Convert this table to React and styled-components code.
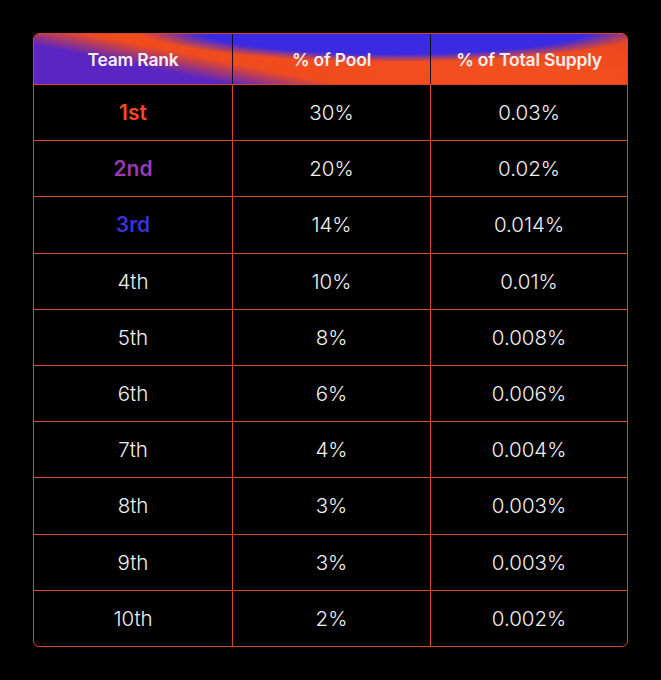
import React from 'react'
import styled, { createGlobalStyle } from 'styled-components'

const Global = createGlobalStyle`
  html, body {
    margin: 0;
    background: #000;
  }
  body {
    font-family: Inter, "Noto Sans", sans-serif;
    color: #f2f2f2;
  }
`

const Page = styled.div`
  width: 661px;
  height: 680px;
  padding: 33px 33px 0 33px;
  box-sizing: border-box;
  background: #000;
`

const Table = styled.div`
  width: 595px;
  display: grid;
  grid-template-columns: 198px 198px 1fr;
  grid-template-rows: 50px repeat(10, 56.2px);
  border: 1px solid #d8452b;
  border-radius: 6px;
  overflow: hidden;
  box-sizing: border-box;
`

const Header = styled.div`
  grid-column: 1 / -1;
  display: grid;
  grid-template-columns: 198px 198px 1fr;
  background:
    radial-gradient(ellipse 262px 36px at 360px -8px, #3a2be2 0%, #3a2be2 78%, rgba(58, 43, 226, 0) 100%),
    linear-gradient(11.4deg, #5a25c2 0%, #5a25c2 23%, #f04b1d 36%, #f24f1f 70%, #e8461c 100%);
`

const HeadCell = styled.div`
  display: flex;
  align-items: center;
  justify-content: center;
  font-size: 17.5px;
  font-weight: 600;
  color: #f6eef2;
  letter-spacing: -0.2px;
  border-left: ${p => (p.$first ? 'none' : '1px solid #1a0a20')};
`

const Cell = styled.div`
  display: flex;
  align-items: center;
  justify-content: center;
  font-size: ${p => (p.$color ? '21px' : '20.5px')};
  font-weight: ${p => (p.$color ? 600 : 300)};
  color: ${p => p.$color || '#f0f0f0'};
  border-top: 1px solid #d8452b;
  border-left: ${p => (p.$first ? 'none' : '1px solid #d8452b')};
`

const rows = [
  ['1st', '30%', '0.03%', '#ef4a24'],
  ['2nd', '20%', '0.02%', '#9a3cb0'],
  ['3rd', '14%', '0.014%', '#3c2fd6'],
  ['4th', '10%', '0.01%'],
  ['5th', '8%', '0.008%'],
  ['6th', '6%', '0.006%'],
  ['7th', '4%', '0.004%'],
  ['8th', '3%', '0.003%'],
  ['9th', '3%', '0.003%'],
  ['10th', '2%', '0.002%'],
]

export default function App() {
  return (
    <>
      <Global />
      <Page>
        <Table>
          <Header>
            <HeadCell $first>Team Rank</HeadCell>
            <HeadCell>% of Pool</HeadCell>
            <HeadCell>% of Total Supply</HeadCell>
          </Header>
          {rows.map(([rank, pool, supply, color]) => (
            <React.Fragment key={rank}>
              <Cell $first $color={color}>{rank}</Cell>
              <Cell>{pool}</Cell>
              <Cell>{supply}</Cell>
            </React.Fragment>
          ))}
        </Table>
      </Page>
    </>
  )
}
